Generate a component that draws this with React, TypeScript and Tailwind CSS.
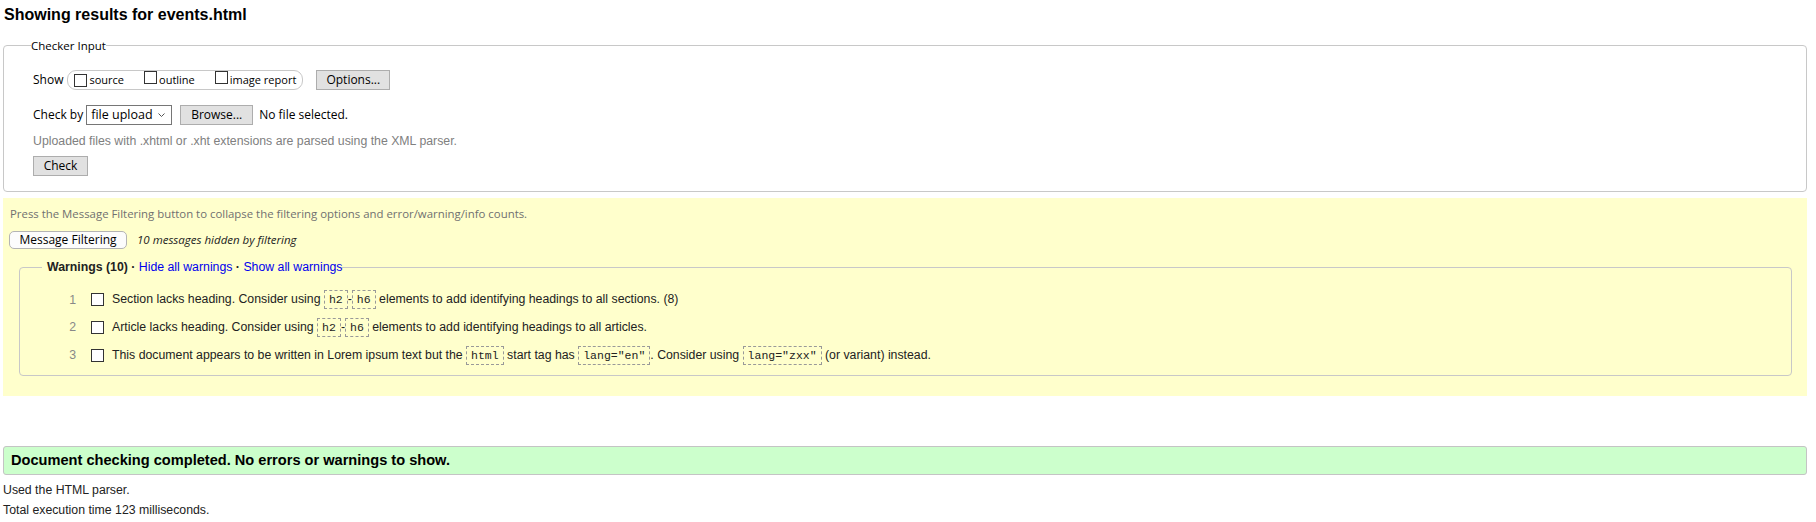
import React from 'react';

const ui = "font-['Open_Sans',sans-serif]";

function Box() {
  return <span className="inline-block h-[13px] w-[13px] shrink-0 border border-[#333] bg-white" />;
}

function Code({ children }: { children: React.ReactNode }) {
  return (
    <code className="inline-block border border-dashed border-[#999] px-[4px] align-middle font-['Liberation_Mono',monospace] text-[11.5px] leading-[17px] text-[#222]">
      {children}
    </code>
  );
}

function Btn({ children, w }: { children: React.ReactNode; w: string }) {
  return (
    <span className={`${ui} ${w} flex h-[20px] items-center justify-center border border-[#adadad] bg-[#e1e1e1] text-[12px] text-black`}>
      {children}
    </span>
  );
}

export default function App() {
  const warnings: React.ReactNode[] = [
    <>Section lacks heading. Consider using <Code>h2</Code>-<Code>h6</Code> elements to add identifying headings to all sections. (8)</>,
    <>Article lacks heading. Consider using <Code>h2</Code>-<Code>h6</Code> elements to add identifying headings to all articles.</>,
    <>This document appears to be written in Lorem ipsum text but the <Code>html</Code> start tag has <Code>lang="en"</Code>. Consider using <Code>lang="zxx"</Code> (or variant) instead.</>,
  ];

  return (
    <div className="min-h-[522px] bg-white pl-[3px] pr-[9px] font-['Liberation_Sans',Arial,sans-serif] text-[12.3px] text-[#111]">
      <h1 className="pl-[1px] pt-[6px] text-[16px] font-bold leading-[18px] text-black">Showing results for events.html</h1>

      {/* Checker input */}
      <fieldset className="mt-[13px] rounded-[4px] border border-[#c8c8c8] pb-[15px] pl-[29px]">
        <legend className={`${ui} -ml-[2px] text-[11.5px] leading-[17px] text-black`}>Checker Input</legend>

        <div className={`${ui} mt-[16px] flex h-[20px] items-center text-[12px] text-black`}>
          <span>Show</span>
          <span className="ml-[4px] flex h-[20px] items-center rounded-[9px] border border-[#c8c8c8] px-[6px]">
            <Box />
            <span className="ml-[2px] text-[11px]">source</span>
            <span className="ml-[20px]"><Box /></span>
            <span className="ml-[2px] text-[11px]">outline</span>
            <span className="ml-[20px]"><Box /></span>
            <span className="ml-[2px] text-[11px]">image report</span>
          </span>
          <span className="ml-[13px]"><Btn w="w-[74px]">Options...</Btn></span>
        </div>

        <div className={`${ui} mt-[15px] flex h-[20px] items-center text-[12px] text-black`}>
          <span>Check by</span>
          <span className="ml-[3px] flex h-[20px] w-[86px] items-center justify-between border border-[#767676] bg-white pl-[4px] pr-[6px] text-[12.5px]">
            file upload
            <svg width="7" height="4" viewBox="0 0 7 4" fill="none" stroke="#555" strokeWidth="1">
              <path d="M0.5 0.5 L3.5 3.5 L6.5 0.5" />
            </svg>
          </span>
          <span className="ml-[8px]"><Btn w="w-[73px]">Browse...</Btn></span>
          <span className="ml-[6px]">No file selected.</span>
        </div>

        <p className="mt-[8px] leading-[16px] text-[#808080]">Uploaded files with .xhtml or .xht extensions are parsed using the XML parser.</p>

        <div className="mt-[7px] flex">
          <Btn w="w-[55px]">Check</Btn>
        </div>
      </fieldset>

      {/* Message filtering */}
      <div className="mt-[6px] bg-[#ffffcc] pb-[20px] pl-[7px] pr-[15px] pt-[8px]">
        <p className={`${ui} text-[11.4px] leading-[16px] text-[#707070]`}>
          Press the Message Filtering button to collapse the filtering options and error/warning/info counts.
        </p>
        <div className={`${ui} mt-[9px] flex h-[18px] items-center text-black`}>
          <span className="-ml-[1px] flex h-[18px] w-[118px] items-center justify-center rounded-[5px] border border-[#b4b4b4] bg-[#fcfcfc] text-[12px]">
            Message Filtering
          </span>
          <span className="ml-[10px] text-[11.5px] italic text-[#222]">10 messages hidden by filtering</span>
        </div>

        <fieldset className="ml-[9px] mt-[11px] rounded-[4px] border border-[#c8c8c8] pb-[6px]">
          <legend className="ml-[22px] pl-[5px] leading-[15px]">
            <span className="font-bold text-[#222]">Warnings (10)</span>
            <span className="font-bold text-[#222]"> · </span>
            <span className="text-[#0000ee]">Hide all warnings</span>
            <span className="font-bold text-[#222]"> · </span>
            <span className="text-[#0000ee]">Show all warnings</span>
          </legend>
          <ol className="mt-[11px]">
            {warnings.map((w, i) => (
              <li key={i} className="flex h-[27.67px] items-center">
                <span className="w-[56px] text-right text-[#888]">{i + 1}</span>
                <span className="ml-[15px] flex"><Box /></span>
                <span className="ml-[8px] text-[#222]">{w}</span>
              </li>
            ))}
          </ol>
        </fieldset>
      </div>

      {/* Result */}
      <div className="mt-[50px] flex h-[29px] items-center rounded-[3px] border border-[#c4c4c4] bg-[#ccffcc] pl-[7px] text-[14.6px] font-bold text-black">
        Document checking completed. No errors or warnings to show.
      </div>
      <p className="mt-[5px] leading-[20px] text-[#222]">Used the HTML parser.</p>
      <p className="leading-[20px] text-[#222]">Total execution time 123 milliseconds.</p>
    </div>
  );
}
